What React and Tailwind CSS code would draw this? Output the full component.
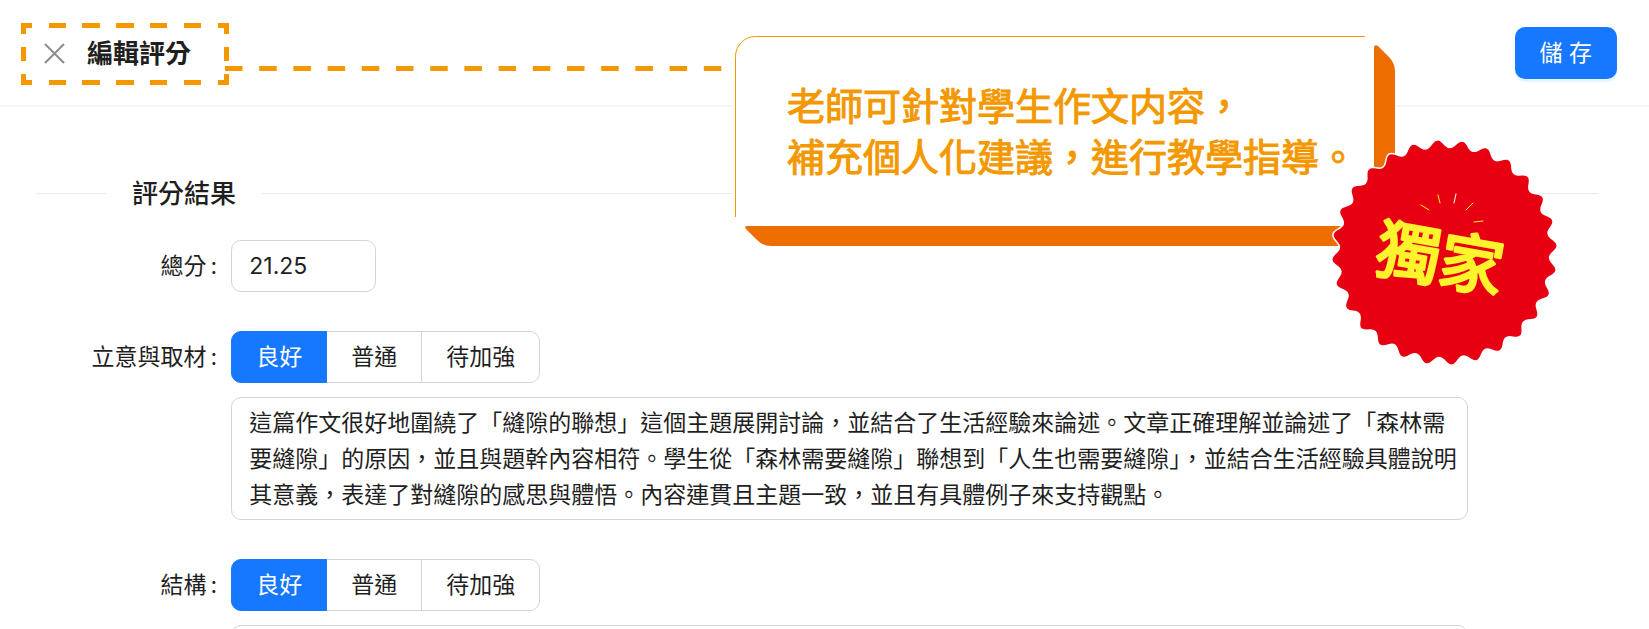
import React, { useState } from 'react';

const LEVELS = ['良好', '普通', '待加強'];

const IDEA_COMMENT =
  '這篇作文很好地圍繞了「縫隙的聯想」這個主題展開討論，並結合了生活經驗來論述。文章正確理解並論述了「森林需要縫隙」的原因，並且與題幹內容相符。學生從「森林需要縫隙」聯想到「人生也需要縫隙」，並結合生活經驗具體說明其意義，表達了對縫隙的感思與體悟。內容連貫且主題一致，並且有具體例子來支持觀點。';

// Zigzag circle with softened corners
const starburstPath = (cx, cy, outer, inner, teeth, startDeg) => {
  const points = [];
  for (let i = 0; i < teeth * 2; i++) {
    const angle = ((startDeg + (i * 180) / teeth) * Math.PI) / 180;
    const r = i % 2 === 0 ? outer : inner;
    points.push([cx + r * Math.sin(angle), cy - r * Math.cos(angle)]);
  }
  const between = (a, b, t) => `${(a[0] + (b[0] - a[0]) * t).toFixed(2)} ${(a[1] + (b[1] - a[1]) * t).toFixed(2)}`;
  return (
    points
      .map((p, i) => {
        const prev = points[(i + points.length - 1) % points.length];
        const next = points[(i + 1) % points.length];
        return `${i === 0 ? 'M' : 'L'}${between(p, prev, 0.4)} Q${p[0].toFixed(2)} ${p[1].toFixed(2)} ${between(p, next, 0.4)}`;
      })
      .join(' ') + 'Z'
  );
};

const Header = () => (
  <header className="flex items-center justify-between border-b-2 border-[#f5f5f5] pt-[27px] pb-[26px] pl-[44px] pr-8">
    <div className="flex items-center gap-[22px]">
      <button type="button" aria-label="關閉" className="text-[#8c8c8c]">
        <svg className="block h-[21px] w-[21px]" viewBox="0 0 21 21" fill="none" stroke="currentColor" strokeWidth="2">
          <path d="M1 1l19 19M20 1L1 20" />
        </svg>
      </button>
      <h1 className="pt-0.5 text-[26px] leading-9 font-bold">編輯評分</h1>
    </div>
    <button
      type="button"
      className="h-[52px] rounded-[10px] bg-[#1677ff] px-[25px] text-[23px] text-white shadow-[0_3px_0_rgba(5,145,255,0.1)]"
    >
      儲 存
    </button>
  </header>
);

const SectionTitle = ({ children }) => (
  <div className="flex items-center gap-[26px]">
    <span className="h-px w-[70px] bg-[#ededed]" />
    <h2 className="pt-0.5 text-[26px] leading-[38px] font-medium">{children}</h2>
    <span className="h-px flex-1 bg-[#ededed]" />
  </div>
);

const Field = ({ id, htmlFor, label, children }) => (
  <div className="grid grid-cols-[3fr_19fr_2fr]">
    <label id={id} htmlFor={htmlFor} className="pr-[14px] text-right text-[23px] leading-[52px] whitespace-nowrap">
      {label}
      <span className="ml-1">:</span>
    </label>
    <div className="flex min-w-0 flex-col items-start gap-[14px]">{children}</div>
  </div>
);

const LevelField = ({ name, label, comment }) => {
  const [level, setLevel] = useState('良好');

  return (
    <Field id={`${name}-label`} htmlFor={`${name}-comment`} label={label}>
      <div role="radiogroup" aria-labelledby={`${name}-label`} className="flex">
        {LEVELS.map((item) => (
          <label
            key={item}
            className="-ml-px flex h-[52px] items-center border border-[#d4d4d4] px-6 text-[23px] first:ml-0 first:rounded-l-[10px] last:rounded-r-[10px] has-checked:z-10 has-checked:border-[#1677ff] has-checked:bg-[#1677ff] has-checked:text-white"
          >
            <input
              type="radio"
              name={name}
              value={item}
              checked={level === item}
              onChange={() => setLevel(item)}
              className="sr-only"
            />
            {item}
          </label>
        ))}
      </div>
      <textarea
        id={`${name}-comment`}
        rows={3}
        defaultValue={comment}
        className="block w-full resize-none overflow-hidden rounded-[10px] border border-[#d4d4d4] pt-[7px] pr-1 pb-[6px] pl-[17px] text-[23px] leading-9"
      />
    </Field>
  );
};

const TitleMarker = () => (
  <svg
    className="pointer-events-none absolute top-[23px] left-[21px]"
    width="712"
    height="62"
    fill="none"
    stroke="#f39800"
    strokeWidth="5"
  >
    <path d="M0 2.5H11M28 2.5H45M61 2.5H79M95 2.5H113M129 2.5H146M163 2.5H180M197 2.5H208" />
    <path d="M0 59.5H11M28 59.5H45M61 59.5H79M95 59.5H113M129 59.5H146M163 59.5H180M197 59.5H208" />
    <path d="M2.5 0V11M2.5 24V38M2.5 51V62M205.5 0V11M205.5 24V38M205.5 51V62" />
    <path d="M204 45.5H701" strokeDasharray="17.5 16.7" />
  </svg>
);

const Callout = () => (
  <aside className="absolute top-[34px] left-[733px] h-[214px] w-[662px] bg-white">
    <svg className="absolute inset-0" width="662" height="214" fill="none">
      <path d="M2.5 183V22.5a20 20 0 0 1 20-20H632" stroke="#f39800" strokeWidth="1" />
      <path
        d="M641 14Q641 10 645 12L656 23Q662 29 662 38V212H38Q30 212 24 206L13 195Q11 192 14 192H641Z"
        fill="#ed6d00"
      />
    </svg>
    <p className="relative pt-[47px] pl-[54px] text-[38px] leading-[51px] font-normal whitespace-nowrap text-[#f39800] [-webkit-text-stroke:1px_#f39800]">
      老師可針對學生作文内容，
      <br />
      補充個人化建議，進行教學指導。
    </p>
  </aside>
);

const ExclusiveBadge = () => (
  <svg className="absolute top-[138px] left-[1330px]" width="230" height="230" viewBox="0 0 230 230">
    <path d={starburstPath(114.5, 114.5, 115, 102, 28, 9.2)} fill="#e60012" stroke="#fff" strokeWidth="3" paintOrder="stroke" />
    <g stroke="#fff32d" strokeWidth="1" strokeLinecap="round">
      <path d="M91 67l8 5M108 57l2 8M143 65l-7 7M153 83l-9 1" />
      <path d="M126 56l-2 9" stroke="#fff" />
    </g>
    <text
      x="110"
      y="144"
      textAnchor="middle"
      transform="rotate(10 110 121)"
      fontSize="64"
      fontWeight="400"
      fill="#fff32d"
      stroke="#fff32d"
      strokeWidth="3"
      strokeLinecap="round"
      strokeLinejoin="round"
    >
      獨家
    </text>
  </svg>
);

export default function App() {
  return (
    <div className="relative h-screen overflow-hidden bg-white font-[Inter,'Noto_Sans_CJK_TC',sans-serif] text-[#1f1f1f]">
      <Header />
      <main className="pt-[66px] pr-[51px] pl-9">
        <SectionTitle>評分結果</SectionTitle>
        <form className="mt-[27px] flex flex-col gap-[39px]">
          <Field htmlFor="total-score" label="總分">
            <input
              id="total-score"
              type="text"
              defaultValue="21.25"
              className="h-[52px] w-[145px] rounded-[10px] border border-[#d4d4d4] pl-[17px] text-[23px]"
            />
          </Field>
          <LevelField name="idea" label="立意與取材" comment={IDEA_COMMENT} />
          <LevelField name="structure" label="結構" comment="" />
        </form>
      </main>
      <TitleMarker />
      <Callout />
      <ExclusiveBadge />
    </div>
  );
}
